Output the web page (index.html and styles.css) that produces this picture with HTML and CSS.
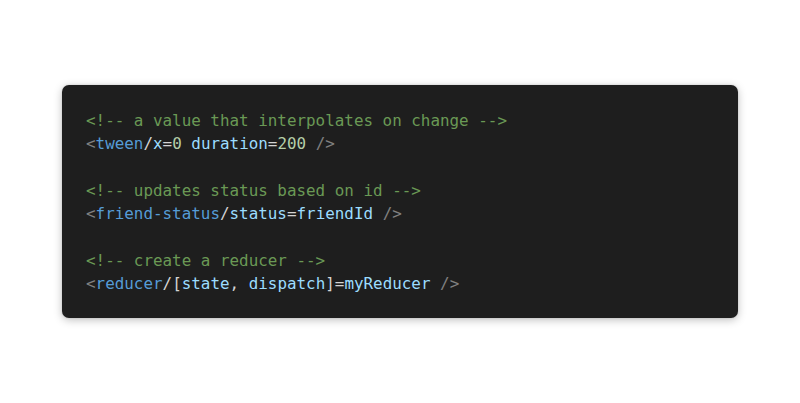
FILE: index.html
```html
<!DOCTYPE html>
<html>
<head>
<meta charset="utf-8">
<link rel="stylesheet" href="styles.css">
</head>
<body>
<main class="stage">
<pre class="code"><span class="c">&lt;!-- a value that interpolates on change --&gt;</span>
<span class="p">&lt;</span><span class="t">tween</span><span class="o">/</span><span class="a">x</span><span class="o">=</span><span class="n">0</span> <span class="a">duration</span><span class="o">=</span><span class="n">200</span> <span class="p">/&gt;</span>

<span class="c">&lt;!-- updates status based on id --&gt;</span>
<span class="p">&lt;</span><span class="t">friend-status</span><span class="o">/</span><span class="a">status</span><span class="o">=</span><span class="a">friendId</span> <span class="p">/&gt;</span>

<span class="c">&lt;!-- create a reducer --&gt;</span>
<span class="p">&lt;</span><span class="t">reducer</span><span class="o">/[</span><span class="a">state</span><span class="o">,</span> <span class="a">dispatch</span><span class="o">]=</span><span class="a">myReducer</span> <span class="p">/&gt;</span></pre>
</main>
</body>
</html>
```
FILE: styles.css
```css
html, body {
  margin: 0;
  padding: 0;
  background: #ffffff;
}
.stage {
  width: 800px;
  height: 403px;
  display: flex;
  align-items: center;
  justify-content: center;
}
.code {
  margin: 0;
  box-sizing: border-box;
  width: 676px;
  padding: 24px 24px 23px;
  background: #1e1e1e;
  border-radius: 7px;
  box-shadow: 0 2px 8px rgba(0, 0, 0, 0.25), 0 0 2px rgba(0, 0, 0, 0.15);
  font-family: "DejaVu Sans Mono", "Liberation Mono", monospace;
  font-size: 15.9px;
  line-height: 23.3px;
  color: #d4d4d4;
}
.c { color: #6a9955; }
.p { color: #808080; }
.t { color: #569cd6; }
.a { color: #9cdcfe; }
.o { color: #d4d4d4; }
.n { color: #b5cea8; }
```
